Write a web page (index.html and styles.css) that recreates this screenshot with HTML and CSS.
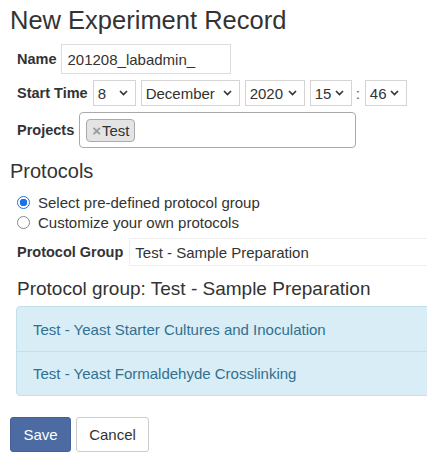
FILE: index.html
```html
<!DOCTYPE html>
<html>
<head>
<meta charset="utf-8">
<link rel="stylesheet" href="styles.css">
</head>
<body>
<div class="page">
  <h1 class="title">New Experiment Record</h1>
  <div class="fields">
    <div class="row row-name">
      <span class="label">Name</span>
      <div class="input name-input">201208_labadmin_</div>
    </div>
    <div class="row row-time">
      <span class="label">Start Time</span>
      <div class="select w-day"><span>8</span><svg class="chev" width="9" height="6" viewBox="0 0 9 6"><path d="M1 1l3.5 3.5L8 1" fill="none" stroke="#333" stroke-width="1.6"/></svg></div>
      <div class="select w-month"><span>December</span><svg class="chev" width="9" height="6" viewBox="0 0 9 6"><path d="M1 1l3.5 3.5L8 1" fill="none" stroke="#333" stroke-width="1.6"/></svg></div>
      <div class="select w-year"><span>2020</span><svg class="chev" width="9" height="6" viewBox="0 0 9 6"><path d="M1 1l3.5 3.5L8 1" fill="none" stroke="#333" stroke-width="1.6"/></svg></div>
      <div class="select w-hour"><span>15</span><svg class="chev" width="9" height="6" viewBox="0 0 9 6"><path d="M1 1l3.5 3.5L8 1" fill="none" stroke="#333" stroke-width="1.6"/></svg></div>
      <span class="colon">:</span>
      <div class="select w-min"><span>46</span><svg class="chev" width="9" height="6" viewBox="0 0 9 6"><path d="M1 1l3.5 3.5L8 1" fill="none" stroke="#333" stroke-width="1.6"/></svg></div>
    </div>
    <div class="row row-projects">
      <span class="label">Projects</span>
      <div class="multi">
        <span class="tag"><span class="tag-x">×</span>Test</span>
      </div>
    </div>
  </div>

  <h2 class="section">Protocols</h2>
  <div class="radios">
    <div class="radio-row"><span class="radio checked"></span><span>Select pre-defined protocol group</span></div>
    <div class="radio-row"><span class="radio"></span><span>Customize your own protocols</span></div>
  </div>
  <div class="row row-group">
    <span class="label">Protocol Group</span>
    <div class="input group-input">Test - Sample Preparation</div>
  </div>
  <h3 class="group-title">Protocol group: Test - Sample Preparation</h3>
  <div class="panel">
    <div class="panel-item">Test - Yeast Starter Cultures and Inoculation</div>
    <div class="panel-item">Test - Yeast Formaldehyde Crosslinking</div>
  </div>
  <div class="actions">
    <button class="btn btn-primary">Save</button>
    <button class="btn btn-default">Cancel</button>
  </div>
</div>
</body>
</html>
```
FILE: styles.css
```css
html, body {
  margin: 0;
  padding: 0;
  overflow: hidden;
  background: #fff;
}
body {
  font-family: "Liberation Sans", Arial, sans-serif;
  font-size: 15px;
  color: #333;
}
.page {
  width: 460px;
  padding: 4px 0 0 10px;
}
.title {
  font-size: 25.5px;
  font-weight: normal;
  line-height: 32px;
  margin: 0 0 8px 0;
  color: #333;
}
.fields {
  padding-left: 7px;
  display: flex;
  flex-direction: column;
  gap: 6px;
}
.row {
  display: flex;
  align-items: center;
}
.label {
  font-weight: bold;
  font-size: 14.5px;
  margin-right: 6px;
  color: #333;
}
.row-name .label { margin-right: 4px; }
.input {
  box-sizing: border-box;
  border: 1px solid #ddd;
  padding: 0 6px;
  display: flex;
  align-items: center;
}
.name-input {
  width: 170px;
  height: 30px;
}
.row-time .label { margin-right: 5px; }
.select {
  box-sizing: border-box;
  height: 26px;
  border: 1px solid #d4d4d4;
  display: flex;
  align-items: center;
  justify-content: space-between;
  padding: 0 7px 0 4px;
  margin-right: 5px;
}
.chev { display: block; }
.w-day { width: 43px; }
.w-month { width: 99px; }
.w-year { width: 60px; margin-right: 5px; }
.w-hour { width: 42px; margin-right: 4px; }
.w-min { width: 42px; }
.colon { margin-right: 5px; margin-left: 0; color: #555; }
.row-projects .label { margin-right: 5px; }
.multi {
  box-sizing: border-box;
  width: 277px;
  height: 36px;
  border: 1px solid #aaa;
  border-radius: 4px;
  padding: 5px 6px;
  display: flex;
  align-items: center;
}
.tag {
  box-sizing: border-box;
  height: 23px;
  display: inline-flex;
  align-items: center;
  background: #e4e4e4;
  border: 1px solid #aaa;
  border-radius: 4px;
  padding: 0 4px 0 5px;
  color: #333;
}
.tag-x {
  color: #999;
  font-weight: bold;
  font-size: 15px;
  margin-right: 1px;
}
.section {
  font-size: 20px;
  font-weight: normal;
  margin: 10px 0 0 0;
  line-height: 26px;
  color: #333;
}
.radios {
  padding-left: 7px;
  margin-top: 11px;
  display: flex;
  flex-direction: column;
  gap: 6px;
}
.radio-row {
  display: flex;
  align-items: center;
  height: 14px;
}
.radio {
  box-sizing: border-box;
  width: 13px;
  height: 13px;
  border-radius: 50%;
  border: 1px solid #8a8a8a;
  margin: 0 8px 0 0;
  background: #fff;
}
.radio.checked {
  border: 1px solid #1a73e8;
  background: radial-gradient(circle, #1a73e8 0 3.5px, #fff 4px);
}
.row-group {
  padding-left: 7px;
  margin-top: 9px;
}
.group-input {
  width: 330px;
  height: 28px;
  border: 1px solid #eee;
  border-right: none;
  padding-left: 5px;
}
.group-title {
  font-size: 19px;
  font-weight: normal;
  line-height: 24px;
  margin: 11px 0 0 7px;
  color: #333;
}
.panel {
  margin: 5px 0 0 6px;
  width: 440px;
  box-sizing: border-box;
  background: #d9edf7;
  border: 1px solid #c4dfec;
  border-radius: 4px;
  color: #31708f;
}
.panel-item {
  height: 44px;
  box-sizing: border-box;
  padding: 0 16px;
  display: flex;
  align-items: center;
}
.panel-item + .panel-item {
  border-top: 1px solid #c4dfec;
}
.actions {
  margin-top: 21px;
  display: flex;
  gap: 5px;
}
.btn {
  font-family: "Liberation Sans", Arial, sans-serif;
  font-size: 15px;
  height: 35px;
  border-radius: 3px;
  padding: 0 10px;
  cursor: pointer;
}
.btn-primary {
  background: #4b6ba2;
  border: 1px solid #446196;
  color: #fff;
  width: 61px;
}
.btn-default {
  background: #fff;
  border: 1px solid #ccc;
  color: #333;
  width: 73px;
}
```
